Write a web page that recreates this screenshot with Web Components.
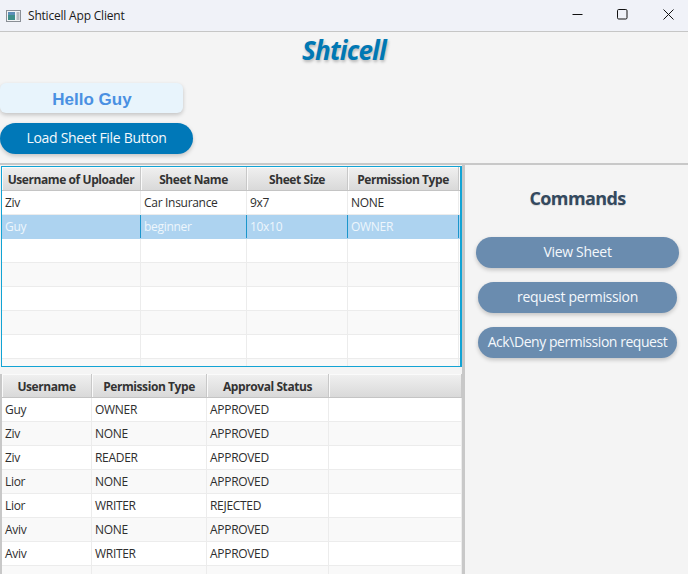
<!DOCTYPE html>
<html>
<head>
<meta charset="utf-8">
<title>Shticell App Client</title>
<style>
    html, body {
        margin: 0;
        height: 100%;
        overflow: hidden;
    }

    body {
        background: #f4f4f4;
        font-family: "Open Sans", "Noto Sans", sans-serif;
    }
</style>
</head>

<body>
    <title-bar>Shticell App Client</title-bar>
    <shticell-app></shticell-app>
</body>

<template id="title-bar-template">
    <style>
        :host {
            display: flex;
            align-items: center;
            height: 31px;
            background: #f0f2f8;
            border-bottom: 1px solid #c6c6c6;
            font-size: 12px;
            letter-spacing: -0.2px;
            color: #1a1a1a;
        }

        .icon {
            margin: 0 6px 0 6px;
        }

        .title {
            flex: 1;
        }

        .control {
            display: flex;
            align-items: center;
            box-sizing: border-box;
            width: 45px;
            height: 31px;
            padding: 0 0 2px 17px;
        }

        .maximize {
            width: 46px;
        }

        .close {
            width: 42px;
        }
    </style>
    <svg class="icon" width="16" height="14" viewBox="0 0 16 14">
        <rect x="0.5" y="1.5" width="14" height="11" fill="#f2f4f6" stroke="#8a8f96"/>
        <rect x="2" y="3" width="7" height="8" fill="#3f8f8a"/>
        <rect x="2" y="3" width="7" height="3" fill="#5c8fb8"/>
        <path d="M10.500 4h3M10.500 6h3M10.500 8h3M10.500 10h3" stroke="#7d848c"/>
    </svg>
    <span class="title"><slot></slot></span>
    <span class="control">
        <svg width="11" height="11" viewBox="0 0 11 11"><path d="M0.500 5.500h10" stroke="#111" fill="none"/></svg>
    </span>
    <span class="control maximize">
        <svg width="11" height="11" viewBox="0 0 11 11"><rect x="0.500" y="0.500" width="9.500" height="9.500" rx="1.200" stroke="#111" fill="none"/></svg>
    </span>
    <span class="control close">
        <svg width="11" height="11" viewBox="0 0 11 11"><path d="M0.500 0.500l10 10M10.500 0.500l-10 10" stroke="#111" fill="none"/></svg>
    </span>
</template>

<template id="pill-button-template">
    <style>
        :host {
            display: flex;
            align-items: center;
            justify-content: center;
            box-sizing: border-box;
            height: 31px;
            padding-bottom: 2px;
            width: var(--pill-width, auto);
            border-radius: 16px;
            background: var(--pill-color, #6a8caf);
            box-shadow: 0 2px 4px rgba(0, 0, 0, 0.2);
            color: #f4f8fc;
            font-size: 14px;
            letter-spacing: var(--pill-spacing, -0.3px);
            white-space: nowrap;
        }
    </style>
    <slot></slot>
</template>

<template id="data-table-template">
    <style>
        :host {
            display: block;
            box-sizing: border-box;
            overflow: hidden;
            background: #fff;
            font-size: 12px;
            color: #2e2e2e;
        }

        .row {
            display: grid;
            grid-template-columns: var(--columns);
            height: 24px;
            box-sizing: border-box;
            border-bottom: 1px solid #ececec;
            background: #fff;
        }

        .row.odd {
            background: #f9f9f9;
        }

        .row.selected {
            background: #add3f0;
            border-bottom-color: #add3f0;
            color: #eef6fc;
        }

        .cell {
            padding: 0 3px;
            border-right: 1px solid #ececec;
            line-height: 23px;
            letter-spacing: -0.3px;
            overflow: hidden;
            white-space: nowrap;
        }

        .row.selected .cell {
            border-right-color: #1b96cc;
        }

        .head {
            height: 24px;
            border-bottom: 1px solid #c4c4c4;
            background: linear-gradient(#f0f0f0, #d9d9d9);
        }

        .head .cell {
            border-right: 1px solid #c8c8c8;
            box-shadow: inset 1px 1px 0 #fafafa;
            font-weight: 700;
            line-height: 25px;
            letter-spacing: -0.42px;
            color: #333;
            text-align: center;
        }
    </style>
    <div id="rows"></div>
</template>

<template id="shticell-app-template">
    <style>
        :host {
            display: flex;
            flex-direction: column;
            height: 542px;
        }

        header {
            display: flex;
            flex-direction: column;
            align-items: flex-start;
            height: 133px;
            box-sizing: border-box;
            border-bottom: 2px solid #c8c8c8;
        }

        h1 {
            align-self: stretch;
            margin: 0;
            height: 37px;
            font: italic 700 26px/37px "Open Sans", sans-serif;
            letter-spacing: -0.8px;
            text-align: center;
            color: #0078b4;
            text-shadow: 1px 2px 3px rgba(0, 0, 0, 0.25);
        }

        .hello {
            display: flex;
            align-items: center;
            justify-content: center;
            box-sizing: border-box;
            width: 183px;
            height: 30px;
            margin: 14px 0 10px;
            padding: 3px 0 0 1px;
            border-radius: 6px;
            background: #e8f4fc;
            box-shadow: 0 2px 4px rgba(0, 0, 0, 0.2);
            font: 700 17px "Liberation Sans", sans-serif;
            color: #4a90e2;
        }

        .load {
            --pill-color: #0078b8;
            --pill-width: 193px;
        }

        main {
            flex: 1;
            display: flex;
            min-height: 0;
        }

        .tables {
            display: flex;
            flex-direction: column;
            box-sizing: content-box;
            width: 462px;
            border-right: 3px solid #c8c8c8;
        }

        .uploads {
            --columns: 139px 106px 101px 111px 1fr;
            height: 201px;
            margin: 1px 0 0 1px;
            border: 1px solid #12a3d4;
            border-right-width: 2px;
            box-sizing: border-box;
        }

        .requests {
            --columns: 90px 115px 122px 1fr;
            flex: 1;
            margin-top: 7px;
            border-left: 2px solid #c8c8c8;
        }

        .commands {
            flex: 1;
            display: flex;
            flex-direction: column;
            align-items: center;
            gap: 14px;
            padding-left: 2px;
        }

        h2 {
            margin: 21px 0 12px;
            height: 25px;
            font: 700 18px/25px "Open Sans", sans-serif;
            letter-spacing: -0.6px;
            color: #34495e;
            text-shadow: 0 1px 1px rgba(0, 0, 0, 0.12);
        }
    </style>
    <header>
        <h1>Shticell</h1>
        <div class="hello">Hello Guy</div>
        <pill-button class="load">Load Sheet File Button</pill-button>
    </header>
    <main>
        <div class="tables">
            <data-table class="uploads" selected="1"
                columns='["Username of Uploader","Sheet Name","Sheet Size","Permission Type",""]'
                rows='[["Ziv","Car Insurance","9x7","NONE",""],["Guy","beginner","10x10","OWNER",""],["","","","",""],["","","","",""],["","","","",""],["","","","",""],["","","","",""],["","","","",""]]'>
            </data-table>
            <data-table class="requests"
                columns='["Username","Permission Type","Approval Status",""]'
                rows='[["Guy","OWNER","APPROVED",""],["Ziv","NONE","APPROVED",""],["Ziv","READER","APPROVED",""],["Lior","NONE","APPROVED",""],["Lior","WRITER","REJECTED",""],["Aviv","NONE","APPROVED",""],["Aviv","WRITER","APPROVED",""],["","","",""]]'>
            </data-table>
        </div>
        <aside class="commands">
            <h2>Commands</h2>
            <pill-button style="--pill-width: 203px">View Sheet</pill-button>
            <pill-button style="--pill-width: 199px">request permission</pill-button>
            <pill-button style="--pill-width: 199px; --pill-spacing: -0.45px">Ack\Deny permission request</pill-button>
        </aside>
    </main>
</template>

<script>
    function stamp(host, id) {
        const template = document.querySelector(id);
        const shadowRoot = host.attachShadow({ mode: 'open' });
        shadowRoot.appendChild(document.importNode(template.content, true));
        return shadowRoot;
    }

    customElements.define('title-bar', class extends HTMLElement {
        constructor() {
            super();
            stamp(this, '#title-bar-template');
        }
    });

    customElements.define('pill-button', class extends HTMLElement {
        constructor() {
            super();
            stamp(this, '#pill-button-template');
        }
    });

    customElements.define('data-table', class extends HTMLElement {
        constructor() {
            super();
            stamp(this, '#data-table-template');
        }

        connectedCallback() {
            const box = this.shadowRoot.querySelector('#rows');
            const selected = Number(this.getAttribute('selected') ?? -1);
            box.appendChild(this._row(JSON.parse(this.getAttribute('columns')), 'head'));
            JSON.parse(this.getAttribute('rows')).forEach((cells, i) => {
                let kind = i % 2 ? 'odd' : '';
                if (i === selected) {
                    kind = 'selected';
                }
                box.appendChild(this._row(cells, kind));
            });
        }

        _row(cells, kind) {
            const row = document.createElement('div');
            row.className = `row ${kind}`;
            for (const text of cells) {
                const cell = document.createElement('div');
                cell.className = 'cell';
                cell.textContent = text;
                row.appendChild(cell);
            }
            return row;
        }
    });

    customElements.define('shticell-app', class extends HTMLElement {
        constructor() {
            super();
            stamp(this, '#shticell-app-template');
        }
    });
</script>

</html>
